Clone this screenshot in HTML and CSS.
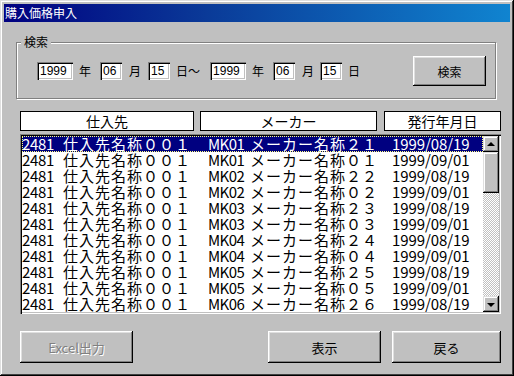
FILE: index.html
```html
<!DOCTYPE html>
<html lang="ja">
<head>
<meta charset="utf-8">
<title>購入価格申入</title>
<link rel="stylesheet" href="styles.css">
</head>
<body>
<div class="window">
  <div class="titlebar">購入価格申入</div>
  <div class="client">
    <div class="group">
      <div class="legend">検索</div>
      <div class="search-row">
        <span class="field w-year">1999</span><span class="lbl m6">年</span>
        <span class="field w-2 m9">06</span><span class="lbl m7">月</span>
        <span class="field w-2 m7">15</span><span class="lbl m6">日～</span>
        <span class="field w-year m10">1999</span><span class="lbl m6">年</span>
        <span class="field w-2 m9">06</span><span class="lbl m7">月</span>
        <span class="field w-2 m6">15</span><span class="lbl m6">日</span>
        <button class="btn btn-search">検索</button>
      </div>
    </div>

    <div class="headers">
      <div class="hdr hdr-supplier">仕入先</div>
      <div class="hdr hdr-maker">メーカー</div>
      <div class="hdr hdr-date">発行年月日</div>
    </div>

    <div class="listbox">
      <div class="rows">
        <div class="row selected"><span class="code">2481</span><span class="name">仕入先名称００１</span><span class="mk">MK01</span><span class="maker">メーカー名称２１</span><span class="date">1999/08/19</span></div>
        <div class="row"><span class="code">2481</span><span class="name">仕入先名称００１</span><span class="mk">MK01</span><span class="maker">メーカー名称０１</span><span class="date">1999/09/01</span></div>
        <div class="row"><span class="code">2481</span><span class="name">仕入先名称００１</span><span class="mk">MK02</span><span class="maker">メーカー名称２２</span><span class="date">1999/08/19</span></div>
        <div class="row"><span class="code">2481</span><span class="name">仕入先名称００１</span><span class="mk">MK02</span><span class="maker">メーカー名称０２</span><span class="date">1999/09/01</span></div>
        <div class="row"><span class="code">2481</span><span class="name">仕入先名称００１</span><span class="mk">MK03</span><span class="maker">メーカー名称２３</span><span class="date">1999/08/19</span></div>
        <div class="row"><span class="code">2481</span><span class="name">仕入先名称００１</span><span class="mk">MK03</span><span class="maker">メーカー名称０３</span><span class="date">1999/09/01</span></div>
        <div class="row"><span class="code">2481</span><span class="name">仕入先名称００１</span><span class="mk">MK04</span><span class="maker">メーカー名称２４</span><span class="date">1999/08/19</span></div>
        <div class="row"><span class="code">2481</span><span class="name">仕入先名称００１</span><span class="mk">MK04</span><span class="maker">メーカー名称０４</span><span class="date">1999/09/01</span></div>
        <div class="row"><span class="code">2481</span><span class="name">仕入先名称００１</span><span class="mk">MK05</span><span class="maker">メーカー名称２５</span><span class="date">1999/08/19</span></div>
        <div class="row"><span class="code">2481</span><span class="name">仕入先名称００１</span><span class="mk">MK05</span><span class="maker">メーカー名称０５</span><span class="date">1999/09/01</span></div>
        <div class="row"><span class="code">2481</span><span class="name">仕入先名称００１</span><span class="mk">MK06</span><span class="maker">メーカー名称２６</span><span class="date">1999/08/19</span></div>
      </div>
      <div class="vscroll">
        <div class="sb-btn"><span class="arrow-up"></span></div>
        <div class="sb-thumb"></div>
        <div class="sb-track"></div>
        <div class="sb-btn"><span class="arrow-down"></span></div>
      </div>
    </div>

    <div class="buttons">
      <button class="btn btn-bottom disabled">Excel出力</button>
      <button class="btn btn-bottom btn-show">表示</button>
      <button class="btn btn-bottom btn-back">戻る</button>
    </div>
  </div>
</div>
</body>
</html>
```

FILE: styles.css
```css
* { box-sizing: border-box; }

html, body {
  margin: 0;
  padding: 0;
  background: #c0c0c0;
}

body {
  font-family: "Noto Sans CJK JP", "Noto Sans", sans-serif;
  font-size: 12px;
  color: #000;
}

.window {
  width: 514px;
  height: 376px;
  background: #c0c0c0;
  padding: 4px;
  display: flex;
  flex-direction: column;
  box-shadow:
    inset -1px -1px #000,
    inset 1px 1px #dfdfdf,
    inset -2px -2px #404040,
    inset 2px 2px #fff;
}

.titlebar {
  height: 18px;
  line-height: 18px;
  padding-left: 1px;
  color: #fff;
  font-size: 12px;
  background: linear-gradient(90deg, #000080 0%, #0a3a98 40%, #1084d0 100%);
  white-space: nowrap;
}

.client {
  display: flex;
  flex-direction: column;
  flex: 1;
}

/* ---- group box ---- */
.group {
  margin: 20px 0 0 12px;
  width: 480px;
  height: 57px;
  border: 1px solid #808080;
  box-shadow: inset 1px 1px #fff, 1px 1px #fff;
  display: flex;
  flex-direction: column;
}

.legend {
  margin: -7px 0 0 4px;
  padding: 0 3px;
  width: max-content;
  background: #c0c0c0;
  font-size: 12px;
  line-height: 12px;
  height: 12px;
}

.search-row {
  display: flex;
  align-items: center;
  margin-top: 8px;
  padding-left: 20px;
  height: 30px;
}

.field {
  height: 18px;
  background: #fff;
  font-family: "Liberation Sans", sans-serif;
  font-size: 12px;
  line-height: 16px;
  padding: 1px 0 0 3px;
  box-shadow:
    inset 1px 1px #808080,
    inset 2px 2px #000,
    inset -1px -1px #fff,
    inset -2px -2px #c0c0c0;
}
.w-year { width: 36px; }
.w-2 { width: 22px; }

.lbl {
  font-size: 12px;
  line-height: 14px;
}

.m6 { margin-left: 6px; }
.m7 { margin-left: 7px; }
.m9 { margin-left: 9px; }
.m10 { margin-left: 10px; }

/* ---- buttons ---- */
.btn {
  font-family: "Noto Sans CJK JP", sans-serif;
  font-size: 12px;
  color: #000;
  background: #c0c0c0;
  border: 0;
  padding: 0;
  margin: 0;
  box-shadow:
    inset -1px -1px #000,
    inset 1px 1px #fff,
    inset -2px -2px #808080,
    inset 2px 2px #dfdfdf;
}

.btn-search {
  width: 73px;
  height: 30px;
  margin-left: auto;
  margin-right: 9px;
}

/* ---- column headers ---- */
.headers {
  display: flex;
  margin: 12px 0 0 16px;
  height: 20px;
}

.hdr {
  height: 20px;
  border: 1px solid #000;
  background: #fff;
  font-size: 14px;
  line-height: 18px;
  text-align: center;
}
.hdr-supplier { width: 174px; }
.hdr-maker { width: 177px; margin-left: 6px; }
.hdr-date { width: 117px; margin-left: 7px; }

/* ---- list box ---- */
.listbox {
  margin: 3px 0 0 16px;
  width: 481px;
  height: 180px;
  padding: 2px;
  background: #fff;
  display: flex;
  box-shadow:
    inset 1px 1px #808080,
    inset 2px 2px #000,
    inset -1px -1px #fff,
    inset -2px -2px #c0c0c0;
}

.rows {
  flex: 1;
  overflow: hidden;
}

.row {
  display: flex;
  height: 16px;
  line-height: 16px;
  font-size: 15px;
  white-space: nowrap;
  color: #000;
}

.row.selected {
  background: #000080;
  color: #fff;
  outline: 1px dotted #ffff80;
  outline-offset: -1px;
}

.code { width: 41px; letter-spacing: -0.3px; }
.name { width: 145px; letter-spacing: 1px; }
.mk { width: 42px; letter-spacing: -0.6px; }
.maker { width: 142px; letter-spacing: 1px; }
.date { letter-spacing: -0.1px; }

/* ---- scrollbar ---- */
.vscroll {
  width: 16px;
  display: flex;
  flex-direction: column;
}

.sb-btn,
.sb-thumb {
  background: #c0c0c0;
  box-shadow:
    inset -1px -1px #000,
    inset 1px 1px #dfdfdf,
    inset -2px -2px #808080,
    inset 2px 2px #fff;
}

.sb-btn {
  height: 16px;
  display: flex;
  align-items: center;
  justify-content: center;
}

.sb-thumb { height: 41px; }

.sb-track {
  flex: 1;
  background: repeating-conic-gradient(#c0c0c0 0 25%, #fff 0 50%) 0 0 / 2px 2px;
}

.arrow-up,
.arrow-down {
  width: 0;
  height: 0;
  border-left: 4px solid transparent;
  border-right: 4px solid transparent;
}
.arrow-up { border-bottom: 4px solid #000; margin-top: -1px; }
.arrow-down { border-top: 4px solid #000; margin-top: 1px; }

/* ---- bottom buttons ---- */
.buttons {
  display: flex;
  margin: 17px 0 0 16px;
}

.btn-bottom {
  width: 113px;
  height: 32px;
  font-size: 13px;
}

.btn-show { margin-left: 135px; }
.btn-back { margin-left: 11px; width: 109px; }

.btn.disabled {
  color: #808080;
  text-shadow: 1px 1px #fff;
}
```
